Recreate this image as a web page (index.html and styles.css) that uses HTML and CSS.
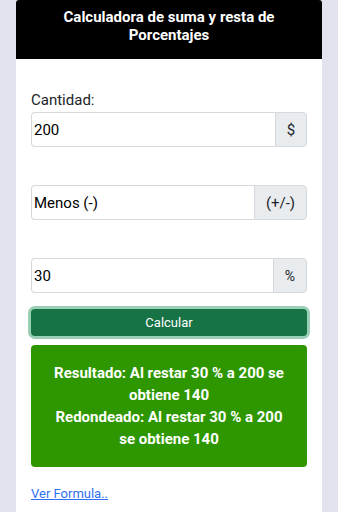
FILE: index.html
```html
<!DOCTYPE html>
<html lang="es">
<head>
<meta charset="utf-8">
<link rel="stylesheet" href="styles.css">
</head>
<body>
<div class="card">
  <div class="card-header">Calculadora de suma y resta de Porcentajes</div>
  <div class="card-body">
    <label class="label">Cantidad:</label>
    <div class="input-group">
      <input class="form-control" type="text" value="200">
      <span class="addon addon-dollar">$</span>
    </div>
    <div class="input-group gap-top">
      <div class="form-control select">Menos (-)</div>
      <span class="addon addon-sign">(+/-)</span>
    </div>
    <div class="input-group gap-top">
      <input class="form-control" type="text" value="30">
      <span class="addon addon-pct">%</span>
    </div>
    <button class="btn">Calcular</button>
    <div class="result">Resultado: Al restar 30 % a 200 se obtiene 140<br>Redondeado: Al restar 30 % a 200 se obtiene 140</div>
    <a class="link" href="#">Ver Formula..</a>
  </div>
</div>
</body>
</html>
```
FILE: styles.css
```css
html, body {
  margin: 0;
  padding: 0;
  background: #e3e3ef;
  font-family: Roboto, "Liberation Sans", sans-serif;
  color: #212529;
}
.card {
  margin: 0 16px;
  background: #fff;
  min-height: 512px;
  border-radius: 3px 3px 0 0;
}
.card-header {
  background: #000;
  color: #fff;
  font-weight: bold;
  font-size: 15px;
  line-height: 18px;
  text-align: center;
  padding: 8px 30px 15px;
  border-radius: 3px 3px 0 0;
}
.card-body {
  padding: 30px 15px 0;
  display: flex;
  flex-direction: column;
}
.label {
  font-size: 15px;
  line-height: 23px;
  display: block;
}
.input-group {
  display: flex;
  height: 35px;
  box-sizing: border-box;
}
.gap-top {
  margin-top: 38px;
}
.form-control {
  flex: 1;
  min-width: 0;
  box-sizing: border-box;
  height: 35px;
  border: 1px solid #d5d8dc;
  border-right: none;
  border-radius: 4px 0 0 4px;
  padding: 0 2px;
  font-family: inherit;
  font-size: 15px;
  color: #000;
  background: #fff;
  outline: none;
  margin: 0;
}
.select {
  display: flex;
  align-items: center;
}
.addon {
  box-sizing: border-box;
  height: 35px;
  display: flex;
  align-items: center;
  justify-content: center;
  background: #e9ecef;
  border: 1px solid #d5d8dc;
  border-radius: 0 4px 4px 0;
  font-size: 15px;
  color: #212529;
}
.addon-dollar { width: 32px; }
.addon-sign { width: 53px; }
.addon-pct { width: 34px; font-size: 14px; }
.btn {
  margin-top: 16px;
  height: 27px;
  border: none;
  border-radius: 4px;
  background: #177245;
  color: #fff;
  font-family: inherit;
  font-size: 13px;
  box-shadow: 0 0 0 3px #98cfb5;
  padding: 0;
}
.result {
  margin-top: 9px;
  background: #2e9700;
  border-radius: 4px;
  color: #fff;
  font-weight: bold;
  font-size: 15px;
  line-height: 22px;
  text-align: center;
  padding: 17px 19px;
}
.link {
  margin-top: 18px;
  align-self: flex-start;
  color: #2f6ff5;
  font-size: 13px;
  line-height: 18px;
  text-decoration: underline;
}
```
